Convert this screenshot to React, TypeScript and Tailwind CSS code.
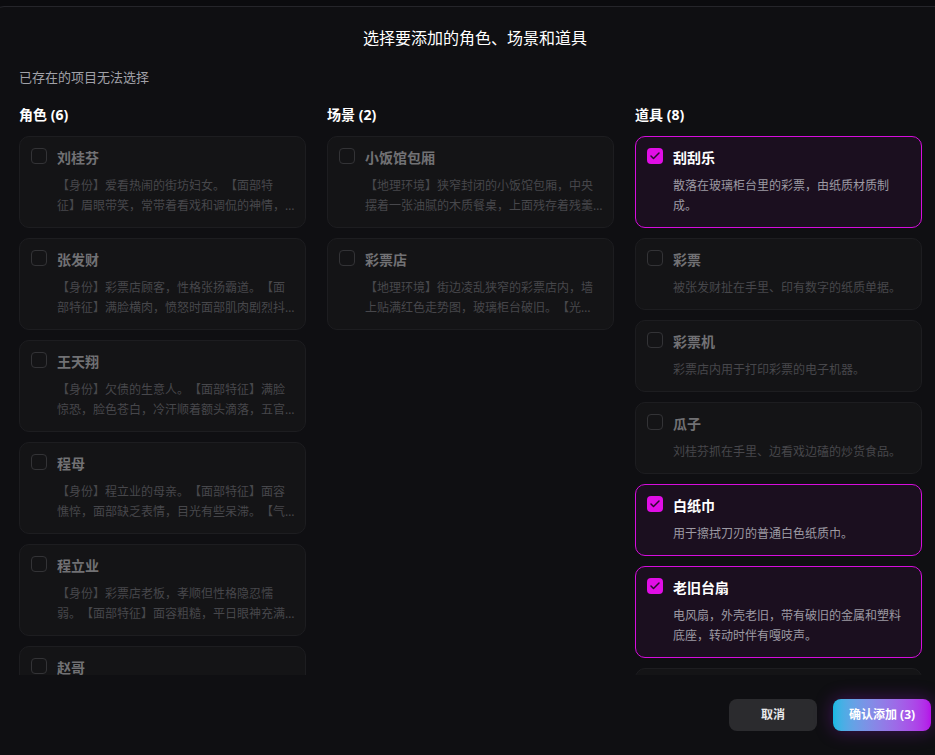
import React from "react";
import { Check } from "lucide-react";

type Item = {
  name: string;
  desc: string;
  selected?: boolean;
};

const roles: Item[] = [
  {
    name: "刘桂芬",
    desc: "【身份】爱看热闹的街坊妇女。【面部特征】眉眼带笑，常带着看戏和调侃的神情，说话时嘴角微微上扬。",
  },
  {
    name: "张发财",
    desc: "【身份】彩票店顾客，性格张扬霸道。【面部特征】满脸横肉，愤怒时面部肌肉剧烈抖动，眼神凶狠。",
  },
  {
    name: "王天翔",
    desc: "【身份】欠债的生意人。【面部特征】满脸惊恐，脸色苍白，冷汗顺着额头滴落，五官因恐惧而扭曲。",
  },
  {
    name: "程母",
    desc: "【身份】程立业的母亲。【面部特征】面容憔悴，面部缺乏表情，目光有些呆滞。【气质】沉默寡言。",
  },
  {
    name: "程立业",
    desc: "【身份】彩票店老板，孝顺但性格隐忍懦弱。【面部特征】面容粗糙，平日眼神充满疲惫与无奈。",
  },
  {
    name: "赵哥",
    desc: "【身份】放贷的地头蛇。【面部特征】目光阴冷，嘴角常挂着不屑的冷笑。",
  },
];

const scenes: Item[] = [
  {
    name: "小饭馆包厢",
    desc: "【地理环境】狭窄封闭的小饭馆包厢，中央摆着一张油腻的木质餐桌，上面残存着残羹冷炙。",
  },
  {
    name: "彩票店",
    desc: "【地理环境】街边凌乱狭窄的彩票店内，墙上贴满红色走势图，玻璃柜台破旧。【光线】昏暗。",
  },
];

const props: Item[] = [
  { name: "刮刮乐", desc: "散落在玻璃柜台里的彩票，由纸质材质制成。", selected: true },
  { name: "彩票", desc: "被张发财扯在手里、印有数字的纸质单据。" },
  { name: "彩票机", desc: "彩票店内用于打印彩票的电子机器。" },
  { name: "瓜子", desc: "刘桂芬抓在手里、边看戏边磕的炒货食品。" },
  { name: "白纸巾", desc: "用于擦拭刀刃的普通白色纸质巾。", selected: true },
  {
    name: "老旧台扇",
    desc: "电风扇，外壳老旧，带有破旧的金属和塑料底座，转动时伴有嘎吱声。",
    selected: true,
  },
  { name: "水果刀", desc: "程立业藏在柜台下的一把旧水果刀。" },
  { name: "欠条", desc: "写有借款金额与签名的纸质欠条。" },
];

const ItemCard: React.FC<{ item: Item }> = ({ item }) => {
  return (
    <div
      className={`flex gap-[10px] rounded-[10px] border py-[11px] pl-[11px] pr-[9px] ${
        item.selected
          ? "border-[#d60ddd] bg-[#1b0f1f]"
          : "border-[#1d1d20] bg-[#141416]"
      }`}
    >
      {item.selected ? (
        <div className="flex h-4 w-4 shrink-0 items-center justify-center rounded-[4px] bg-[#e10ee6]">
          <Check className="h-3 w-3 text-[#2b0830]" strokeWidth={3} />
        </div>
      ) : (
        <div className="h-4 w-4 shrink-0 rounded-[4px] border border-[#333336]" />
      )}
      <div className="min-w-0 flex-1">
        <div
          className={`text-sm font-bold leading-5 ${
            item.selected ? "text-white" : "text-[#717174]"
          }`}
        >
          {item.name}
        </div>
        <p
          className={`mt-2 line-clamp-2 text-xs leading-5 ${
            item.selected ? "text-[#9d9aa3]" : "text-[#47474b]"
          }`}
        >
          {item.desc}
        </p>
      </div>
    </div>
  );
};

const Column: React.FC<{ title: string; items: Item[] }> = ({ title, items }) => (
  <div className="flex flex-col">
    <h3 className="text-sm font-bold leading-5 text-white">
      {title} ({items.length})
    </h3>
    <div className="mt-[11px] flex flex-col gap-[10px]">
      {items.map((it) => (
        <ItemCard key={it.name} item={it} />
      ))}
    </div>
  </div>
);

export default function App() {
  return (
    <div
      className="h-screen overflow-hidden bg-[#0b0b0e] pt-[6px] [text-spacing-trim:space-all]"
      style={{ fontFamily: '"Noto Sans", "Noto Sans CJK SC", sans-serif' }}
    >
      <div className="-ml-2 flex h-[752px] w-[966px] flex-col rounded-xl border border-[#25252a] bg-[#0f0f12]">
        <div className="px-[26px] pt-[19px]">
          <h2 className="text-center text-base font-normal leading-6 text-white">
            选择要添加的角色、场景和道具
          </h2>
          <p className="mt-[17px] text-[13px] leading-5 text-[#a1a1a8]">
            已存在的项目无法选择
          </p>
        </div>
        <div className="mt-[18px] min-h-0 flex-1 overflow-hidden px-[26px]">
          <div className="grid grid-cols-[287px_287px_287px] items-start gap-x-[21px]">
            <Column title="角色" items={roles} />
            <Column title="场景" items={scenes} />
            <Column title="道具" items={props} />
          </div>
        </div>
        <div className="flex justify-end gap-4 px-[26px] pb-[26px] pt-6">
          <button className="h-8 w-[88px] rounded-lg bg-[#2b2b2e] text-xs font-bold text-[#e8e8ea]">
            取消
          </button>
          <button className="h-8 w-[98px] rounded-lg bg-gradient-to-r from-[#10b9e4] to-[#b50fe8] text-xs font-bold text-white shadow-[0_0_18px_rgba(160,30,220,0.35)]">
            确认添加 (3)
          </button>
        </div>
      </div>
    </div>
  );
}
